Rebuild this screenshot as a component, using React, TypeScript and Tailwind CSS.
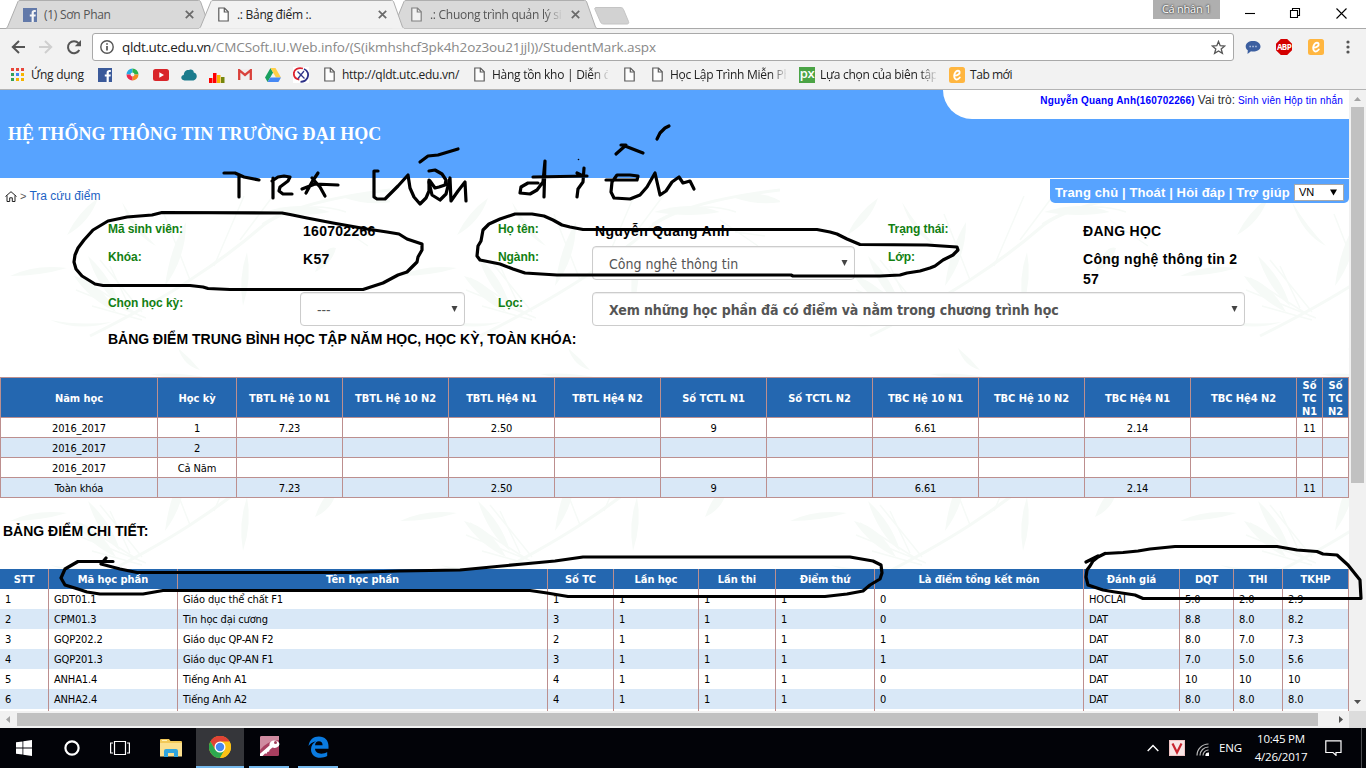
import React from 'react';

type IconProps = { className?: string };

const PageIcon = ({ className = '' }: IconProps) => (
  <svg className={`h-[15px] w-[11px] shrink-0 ${className}`} viewBox="0 0 11 15" fill="#fdfdfd" stroke="#5a5a5a" strokeWidth="1.2">
    <path d="M.8 1h5.7l3.7 3.8V14H.8z" />
    <path d="M6.3 1v4h3.9" fill="none" />
  </svg>
);

const FacebookIcon = ({ className = '' }: IconProps) => (
  <svg className={`h-3.5 w-3.5 shrink-0 ${className}`} viewBox="0 0 14 14">
    <rect width="14" height="14" fill="#3b5a9a" />
    <path d="M8.6 14V8.6H6.8V6.5h1.8V5c0-2 1.1-2.9 2.8-2.9h1.4v2h-1c-.8 0-1 .4-1 1.1v1.3h2l-.3 2.1h-1.7V14z" fill="#fff" />
  </svg>
);

const OrangeE = ({ className = '' }: IconProps) => (
  <svg className={`h-4 w-4 shrink-0 ${className}`} viewBox="0 0 16 16">
    <rect width="16" height="16" rx="2.5" fill="#ffb640" />
    <path d="M5.6 8.6C8.6 8.6 11 7 10.6 4.8 10.3 3.2 7.8 3.3 6.4 5.2 4.9 7.3 4.7 10.5 6.3 11.9 7.6 12.9 9.5 12.1 10.8 10.5" fill="none" stroke="#fff" strokeWidth="1.9" strokeLinecap="round" />
  </svg>
);

const TabClose = () => (
  <svg className="h-[9px] w-[9px] shrink-0" viewBox="0 0 9 9" stroke="#6a6a6a" strokeWidth="1.7">
    <path d="M.8.8l7.4 7.4M8.2.8L.8 8.2" />
  </svg>
);

function Tab({ title, icon, active = false, fade = false }: { title: string; icon: 'fb' | 'page'; active?: boolean; fade?: boolean }) {
  return (
    <div className={`relative -mr-3 h-[29px] w-[205px] shrink-0 ${active ? 'z-10' : ''}`}>
      <svg className="absolute inset-0 h-[29px] w-[205px]" viewBox="0 0 205 29">
        <path d="M0 28.5L1.5 27 12 1.5Q12.5.5 14 .5H192.5q1.5 0 2 1L203.5 27l1.5 1.5" fill={active ? '#f2f2f2' : '#d9d9d9'} stroke="#aeaeae" />
        {active && <path d="M0 29h205" stroke="#f2f2f2" strokeWidth="1.5" />}
      </svg>
      <div className="relative flex h-[29px] items-center pl-[17px]">
        <span className="flex w-[21px]">
          {icon === 'fb' ? <FacebookIcon className="opacity-75" /> : <PageIcon className={active ? 'ml-0.5' : 'ml-0.5 opacity-70'} />}
        </span>
        <span className={`w-[133px] overflow-hidden whitespace-nowrap text-xs tracking-[-0.28px] ${active ? 'text-[#222]' : 'text-[#555]'} ${fade ? '[mask-image:linear-gradient(to_right,#000_115px,transparent_133px)]' : ''}`}>
          {title}
        </span>
        <span className="ml-2"><TabClose /></span>
      </div>
    </div>
  );
}

function TabStrip() {
  return (
    <div className="flex h-[29px] border-b border-[#a9a9a9] bg-white pl-1.5">
      <Tab title="(1) Sơn Phan" icon="fb" />
      <Tab title=".: Bảng điểm :." icon="page" active />
      <Tab title=".: Chuong trình quản lý si" icon="page" fade />
      <svg className="ml-[9px] mt-[7px] h-[18px] w-9 shrink-0" viewBox="0 0 36 18">
        <path d="M2 .5h24c2 0 3 .5 3.5 2l5 12c.6 1.5 0 2.500-1.500 2.500H10c-2 0-3-.8-3.500-2L1 2.500C.6 1.200.8.5 2 .5z" fill="#d2d2d2" stroke="#c4c4c4" />
      </svg>
      <div className="ml-auto mr-[11px] flex">
        <div className="h-[19px] w-[67px] bg-[#afafaf] text-center text-[11px] leading-[18px] tracking-[-0.25px] text-white [text-shadow:0_0_2px_#333,0_0_2px_#444]">Cá nhân 1</div>
        <svg className="ml-[25px] h-[28px] w-[110px]" viewBox="0 0 110 28" fill="none" stroke="#000" strokeWidth="1.1">
          <path d="M0 13.5h10" />
          <path d="M45.5 10.5h7v7h-7zM47.5 10.5v-2h7v7h-2" />
          <path d="M91.5 8.5l10 10M101.5 8.5l-10 10" />
        </svg>
      </div>
    </div>
  );
}

function AddressBar() {
  return (
    <div className="flex h-[36px] items-center bg-[#f2f2f2] pl-[11px]">
      <svg className="h-4 w-[71px]" viewBox="0 0 71 16" fill="none" strokeWidth="2">
        <path d="M14 8H2M8 2L1.8 8 8 14" stroke="#555" />
        <path d="M28 8h12M34 2l6.2 6L34 14" stroke="#cfcfcf" />
        <path d="M68.3 11A6 6 0 1 1 67.5 4.2" stroke="#555" />
        <path d="M70 1v6.2h-6.2z" fill="#555" />
      </svg>
      <div className="ml-[10px] flex h-7 w-[1142px] items-center rounded-[3px] border border-[#a9a9a9] bg-white px-[7px]">
        <svg className="h-3.5 w-3.5" viewBox="0 0 14 14" fill="none" stroke="#555">
          <circle cx="7" cy="7" r="6.2" strokeWidth="1.4" />
          <path d="M7 6v4.5M7 3.2v1.6" strokeWidth="1.7" />
        </svg>
        <span className="ml-2 whitespace-nowrap text-[13.5px] tracking-[-0.34px] text-[#222]">qldt.utc.edu.vn</span>
        <span className="whitespace-nowrap text-[13.5px] tracking-[-0.1px] text-[#888]">/CMCSoft.IU.Web.info/(S(ikmhshcf3pk4h2oz3ou21jjl))/StudentMark.aspx</span>
        <svg className="ml-auto h-[15px] w-[15px]" viewBox="0 0 15 15" fill="none" stroke="#555" strokeWidth="1.3">
          <path d="M7.5 1.4l1.7 4.3 4.6.3-3.6 2.9 1.2 4.5-3.9-2.5-3.9 2.5 1.2-4.5L1.2 6l4.6-.3z" />
        </svg>
      </div>
      <svg className="ml-[11px] h-[15px] w-4" viewBox="0 0 16 15">
        <path d="M8 1c4 0 7.5 2 7.5 5.5S12 11.5 8 11.5c-.8 0-1.5 0-2-.2L2.5 14l.3-3.8C1.3 9.2.7 8 .7 6.5.7 3 4 1 8 1z" fill="#3c5fa0" />
        <path d="M4.5 6.5h1.3M7.4 6.5h1.3M10.3 6.5h1.3" stroke="#c7d4ee" strokeWidth="1.3" />
      </svg>
      <div className="ml-[15px] flex h-4 w-4 items-center justify-center bg-[#d40000] text-[8px] font-bold leading-none tracking-[-0.6px] text-white [clip-path:polygon(30%_0,70%_0,100%_30%,100%_70%,70%_100%,30%_100%,0_70%,0_30%)]">ABP</div>
      <OrangeE className="ml-4" />
      <svg className="ml-[22px] h-3.5 w-1" viewBox="0 0 4 14" fill="#555">
        <circle cx="2" cy="2" r="1.6" /><circle cx="2" cy="7" r="1.6" /><circle cx="2" cy="12" r="1.6" />
      </svg>
    </div>
  );
}

const fadeText = 'w-[116px] overflow-hidden whitespace-nowrap [mask-image:linear-gradient(to_right,#000_100px,transparent_118px)]';
const gridDots = ['#e8463a', '#e8463a', '#e8463a', '#34a058', '#4285f4', '#f6b400', '#34a058', '#f6b400', '#f6b400'];

function BookmarksBar() {
  return (
    <div className="flex h-[25px] items-center border-b border-[#b4b4b4] bg-[#f2f2f2] pb-[5px] pl-[11px] text-xs tracking-[-0.27px] text-[#222]">
      <svg className="h-[13px] w-[13px] shrink-0" viewBox="0 0 13 13">
        {gridDots.map((c, i) => <rect key={i} x={(i % 3) * 5} y={Math.floor(i / 3) * 5} width="3" height="3" fill={c} />)}
      </svg>
      <span className="ml-[7px] w-[67px] whitespace-nowrap">Ứng dụng</span>
      <FacebookIcon />
      <svg className="ml-[14px] h-[13px] w-[13px] shrink-0" viewBox="0 0 13 13" fill="none" strokeWidth="4">
        <path d="M2.5 6.5a4 4 0 0 1 4-4" stroke="#27a9e1" /><path d="M6.5 2.5a4 4 0 0 1 4 4" stroke="#2cb24a" />
        <path d="M10.5 6.5a4 4 0 0 1-4 4" stroke="#f58a1f" /><path d="M6.5 10.5a4 4 0 0 1-4-4" stroke="#ee2a4d" />
      </svg>
      <svg className="ml-[14px] h-3 w-4 shrink-0" viewBox="0 0 16 12">
        <rect width="16" height="12" rx="2.5" fill="#d9252a" /><path d="M6.3 3.2v5.6L11 6z" fill="#fff" />
      </svg>
      <svg className="ml-3 h-3 w-4 shrink-0" viewBox="0 0 16 12" fill="#1b7b8c">
        <path d="M3.5 11.5C-.5 11-.8 6.5 2.8 6 2.8 2.5 5.5.5 8.2 1c1.5-1 4.5-.5 4.6 2.5 3.8.5 4.2 7-.3 8z" />
      </svg>
      <svg className="ml-3 h-4 w-4 shrink-0" viewBox="0 0 16 16">
        <rect y="11" width="3.5" height="5" fill="#f00" /><rect x="4" y="6" width="3.5" height="10" fill="#f00" />
        <rect x="8" y="8" width="3.5" height="8" fill="#f4b400" /><rect x="12" y="10" width="3.5" height="6" fill="#76860b" />
      </svg>
      <svg className="ml-[13px] h-[11px] w-[14px] shrink-0" viewBox="0 0 14 11">
        <rect width="14" height="11" fill="#f0eeee" /><path d="M1.2 11V1.2L7 6l5.8-4.8V11" fill="none" stroke="#d9403a" strokeWidth="2.3" />
      </svg>
      <svg className="ml-[13px] h-[14px] w-4 shrink-0" viewBox="0 0 16 14">
        <path d="M5.5 0L0 9.5 2.6 14 8.1 4.5z" fill="#1aa05f" /><path d="M5.5 0h5L16 9.5h-5.1z" fill="#ffcf48" /><path d="M5.3 9.5H16L13.4 14H2.6z" fill="#4688f4" />
      </svg>
      <svg className="ml-3 h-4 w-4 shrink-0" viewBox="0 0 16 16" fill="none">
        <rect width="16" height="16" fill="#fff" />
        <path d="M10 1.5C5 0 1 2.5.8 6.5c0 3 2.2 5.5 5.5 6" stroke="#dd2330" strokeWidth="1.8" />
        <path d="M11 2c4 1.5 5 5.5 3.3 9-1.3 2.5-3.3 3.7-6.8 3.8" stroke="#2b2f86" strokeWidth="1.8" />
        <path d="M4.5 4.5l7 7M11 4L5 11.5" stroke="#33378c" strokeWidth="1.3" />
      </svg>
      <PageIcon className="ml-[15px]" />
      <span className="ml-[7px] w-[132px] whitespace-nowrap">http://qldt.utc.edu.vn/</span>
      <PageIcon />
      <span className={`ml-[7px] mr-4 ${fadeText}`}>Hàng tồn kho | Diễn đ</span>
      <PageIcon />
      <PageIcon className="ml-[17px]" />
      <span className={`ml-[7px] mr-[13px] ${fadeText}`}>Học Lập Trình Miễn Ph</span>
      <span className="flex h-4 w-4 shrink-0 items-center justify-center bg-[#4ba446] pb-0.5 text-[13px] font-semibold leading-none tracking-[-0.5px] text-white">px</span>
      <span className={`ml-[5px] mr-[13px] ${fadeText}`}>Lựa chọn của biên tập</span>
      <OrangeE />
      <span className="ml-[5px] whitespace-nowrap tracking-[-0.45px]">Tab mới</span>
    </div>
  );
}

function BambooBackdrop() {
  return (
    <svg className="absolute left-0 top-[88px] h-[533px] w-[1349px]" viewBox="0 0 1349 533">
      <defs>
        <pattern id="bamboo" width="390" height="245" patternUnits="userSpaceOnUse">
          <g fill="#f6faf7">
            <path d="M10 98Q35 86 67 90Q40 98 10 98z" />
            <path d="M67 57Q78 34 98 20Q90 44 67 57z" />
            <path d="M122 24Q138 50 156 68Q132 56 122 24z" />
            <path d="M247 74Q252 100 243 128Q238 100 247 74z" />
            <path d="M50 142Q80 148 112 144Q80 154 50 142z" />
            <path d="M178 170Q190 180 200 192Q184 188 178 170z" />
            <path d="M315 94Q325 66 336 70Q332 86 315 94z" />
            <path d="M345 20Q368 10 392 24Q368 28 345 20z" />
            <path d="M150 196Q180 194 210 200Q180 204 150 196z" />
            <path d="M264 34Q300 22 330 34Q300 40 264 34z" />
            <path d="M74 98Q100 104 116 134Q90 122 74 98z" />
            <path d="M88 78Q112 100 120 128Q98 110 88 78z" />
            <path d="M165 108Q170 70 186 44Q186 80 165 108z" />
          </g>
          <g fill="none" stroke="#f6faf7">
            <path d="M90 158Q150 128 190 102T260 50T390 12" strokeWidth="3" />
            <path d="M80 100l60 38M76 112l70 28M100 82l42 52M92 128l50 14M110 88l20 42" strokeWidth="1.5" />
            <path d="M262 46q40 -26 84 -12M240 62q30 -40 42 -56M190 102l-26 -66M214 88l30 -70M330 42l38 26M345 54l30 4" strokeWidth="1.5" />
          </g>
        </pattern>
      </defs>
      <rect width="1349" height="533" fill="url(#bamboo)" />
    </svg>
  );
}

function PageHeader() {
  return (
    <header className="relative">
      <div className="flex h-[88px] items-start justify-between bg-[#57a3ff]">
        <h1 className="pl-2 pt-[33px] font-['Liberation_Serif',serif] text-lg font-bold leading-[22px] tracking-[0.04px] text-white">HỆ THỐNG THÔNG TIN TRƯỜNG ĐẠI HỌC</h1>
        <div className="h-[29px] w-[406px] whitespace-nowrap rounded-bl-[29px] bg-white pr-1.5 pt-[2px] text-right text-[10px] leading-4 tracking-[0.2px] text-[#0000ff]">
          <b className="tracking-[0.18px]">Nguyễn Quang Anh(160702266)</b>{' '}
          <span className="text-xs tracking-normal text-[#333]">Vai trò:</span> Sinh viên Hộp tin nhắn
        </div>
      </div>
      <div className="flex items-start justify-between pt-px">
        <div className="flex h-[34px] items-center pl-[5px] text-xs text-[#1c62c4]">
          <svg className="h-[11px] w-3" viewBox="0 0 12 11" fill="none" stroke="#222">
            <path d="M.5 5.5L6 .7l5.5 4.8M2 4.5v6h2.7V6.8h2.6v3.7H10v-6" />
          </svg>
          <span className="ml-[3px] mr-[3px] text-[11px] text-[#555]">&gt;</span>Tra cứu điểm
        </div>
        <div className="flex h-6 w-[299px] items-center whitespace-nowrap rounded-b-[5px] bg-[#57a3ff] pl-[5px] pt-[3px] text-[13px] font-bold tracking-[0.12px] text-white">
          Trang chủ | Thoát | Hỏi đáp | Trợ giúp
          <div className="ml-1 flex h-[17px] w-[50px] items-center justify-between border border-[#a9a9a9] bg-white pl-1 pr-1.5 text-[11px] font-normal tracking-normal text-black">
            VN
            <svg className="h-[7px] w-[7px]" viewBox="0 0 7 7"><path d="M0 .5h7L3.5 6.5z" /></svg>
          </div>
        </div>
      </div>
    </header>
  );
}

function SelectBox({ text, className }: { text: string; className: string }) {
  return (
    <div className={`flex h-[34px] items-center justify-between rounded border border-[#ccc] bg-white pl-4 pr-1.5 font-['DejaVu_Sans_Condensed','DejaVu_Sans',sans-serif] text-sm text-[#555] shadow-[inset_0_1px_1px_rgba(0,0,0,0.075)] ${className}`}>
      <span className="whitespace-nowrap pt-0.5">{text}</span>
      <svg className="h-1.5 w-[7px]" viewBox="0 0 7 6"><path d="M.5 0h6L3.5 6z" fill="#444" /></svg>
    </div>
  );
}

const Label = ({ children, className = '' }: { children: React.ReactNode; className?: string }) => (
  <span className={`text-xs font-bold leading-5 tracking-[-0.08px] text-[#128012] ${className}`}>{children}</span>
);
const Value = ({ children }: { children: React.ReactNode }) => (
  <span className="pt-0.5 text-sm font-bold leading-5 tracking-[0.28px] text-black">{children}</span>
);

function StudentInfo() {
  return (
    <section className="relative pl-[108px] pt-[6px]">
      <div className="grid h-7 grid-cols-[195px_195px_97px_293px_195px_162px]">
        <Label>Mã sinh viên:</Label><Value>160702266</Value>
        <Label>Họ tên:</Label><Value>Nguyễn Quang Anh</Value>
        <Label>Trạng thái:</Label><Value>ĐANG HỌC</Value>
      </div>
      <div className="grid h-[45px] grid-cols-[195px_195px_94px_296px_195px_162px]">
        <Label>Khóa:</Label><Value>K57</Value>
        <Label>Ngành:</Label><SelectBox text="Công nghệ thông tin" className="-mt-px w-[263px]" />
        <Label>Lớp:</Label><Value>Công nghệ thông tin 2 57</Value>
      </div>
      <div className="grid h-9 grid-cols-[192px_198px_94px_653px]">
        <Label className="pt-px">Chọn học kỳ:</Label><SelectBox text="---" className="w-[165px]" />
        <Label className="pt-px">Lọc:</Label><SelectBox text="Xem những học phần đã có điểm và nằm trong chương trình học" className="font-bold tracking-[-0.1px]" />
      </div>
      <h2 className="pt-px text-sm font-bold leading-5 text-black">BẢNG ĐIỂM TRUNG BÌNH HỌC TẬP NĂM HỌC, HỌC KỲ, TOÀN KHÓA:</h2>
    </section>
  );
}

const summaryHead = ['Năm học', 'Học kỳ', 'TBTL Hệ 10 N1', 'TBTL Hệ 10 N2', 'TBTL Hệ4 N1', 'TBTL Hệ4 N2', 'Số TCTL N1', 'Số TCTL N2', 'TBC Hệ 10 N1', 'TBC Hệ 10 N2', 'TBC Hệ4 N1', 'TBC Hệ4 N2', 'Số TC N1', 'Số TC N2'];
const summaryRows = [
  ['2016_2017', '1', '7.23', '', '2.50', '', '9', '', '6.61', '', '2.14', '', '11', ''],
  ['2016_2017', '2', '', '', '', '', '', '', '', '', '', '', '', ''],
  ['2016_2017', 'Cả Năm', '', '', '', '', '', '', '', '', '', '', '', ''],
  ['Toàn khóa', '', '7.23', '', '2.50', '', '9', '', '6.61', '', '2.14', '', '11', ''],
];
const summaryCols = 'grid grid-cols-[157px_79px_repeat(10,106px)_26px_26px]';
const tableFont = "font-['DejaVu_Sans_Condensed','DejaVu_Sans',sans-serif] text-[11px]";

function SummaryTable() {
  return (
    <div className={`relative mt-7 border-l border-t border-[#bc8f8f] text-center ${tableFont}`}>
      <div className={`h-10 bg-[#2467b0] font-bold leading-[13px] tracking-[-0.05px] text-white ${summaryCols}`}>
        {summaryHead.map((h) => (
          <div key={h} className="flex h-10 items-center justify-center border-b border-r border-[#bc8f8f] pt-0.5">{h}</div>
        ))}
      </div>
      {summaryRows.map((row, r) => (
        <div key={r} className={`h-5 leading-[17px] tracking-[-0.15px] text-black ${r % 2 ? 'bg-[#d9e8f7]' : 'bg-white'} ${summaryCols}`}>
          {row.map((c, i) => <div key={i} className="h-5 border-b border-r border-[#bc8f8f] pt-0.5">{c}</div>)}
        </div>
      ))}
    </div>
  );
}

const detailHead = ['STT', 'Mã học phần', 'Tên học phần', 'Số TC', 'Lần học', 'Lần thi', 'Điểm thứ', 'Là điểm tổng kết môn', 'Đánh giá', 'DQT', 'THI', 'TKHP'];
const detailRows = [
  ['1', 'GDT01.1', 'Giáo dục thể chất F1', '1', '1', '1', '1', '0', 'HOCLAI', '5.0', '2.0', '2.9'],
  ['2', 'CPM01.3', 'Tin học đại cương', '3', '1', '1', '1', '0', 'DAT', '8.8', '8.0', '8.2'],
  ['3', 'GQP202.2', 'Giáo dục QP-AN F2', '2', '1', '1', '1', '1', 'DAT', '8.0', '7.0', '7.3'],
  ['4', 'GQP201.3', 'Giáo dục QP-AN F1', '3', '1', '1', '1', '1', 'DAT', '7.0', '5.0', '5.6'],
  ['5', 'ANHA1.4', 'Tiếng Anh A1', '4', '1', '1', '1', '0', 'DAT', '10', '10', '10'],
  ['6', 'ANHA2.4', 'Tiếng Anh A2', '4', '1', '1', '1', '0', 'DAT', '8.0', '8.0', '8.0'],
  ['', '', '', '', '', '', '', '', '', '', '', ''],
];
const detailCols = 'grid h-5 grid-cols-[49px_129px_370px_66px_85px_77px_99px_209px_96px_54px_49px_66px] leading-[18px]';

function DetailTable() {
  return (
    <div className={`relative ${tableFont}`}>
      <div className={`bg-[#2467b0] text-center font-bold tracking-[-0.05px] text-white ${detailCols}`}>
        {detailHead.map((h) => <div key={h} className="border-r border-[#bc8f8f] pt-0.5">{h}</div>)}
      </div>
      {detailRows.map((row, r) => (
        <div key={r} className={`tracking-[-0.15px] text-black ${r % 2 ? 'bg-[#d9e8f7]' : 'bg-white'} ${detailCols}`}>
          {row.map((c, i) => <div key={i} className="border-r border-[#bc8f8f] pl-[5px] pt-0.5">{c}</div>)}
        </div>
      ))}
    </div>
  );
}

function Taskbar() {
  return (
    <div className="flex h-10 items-center bg-[#020308] text-white">
      <svg className="ml-4 h-4 w-4" viewBox="0 0 16 16" fill="#fff">
        <path d="M0 2.3l6.5-.9v6.2H0zM7.3 1.3L16 0v7.6H7.3zM0 8.4h6.5v6.2L0 13.7zM7.3 8.4H16V16l-8.7-1.3z" />
      </svg>
      <svg className="ml-8 h-4 w-4" viewBox="0 0 16 16"><circle cx="8" cy="8" r="6.6" fill="none" stroke="#fff" strokeWidth="2.2" /></svg>
      <svg className="ml-[30px] h-4 w-5" viewBox="0 0 20 16" fill="none" stroke="#fff" strokeWidth="1.2">
        <path d="M4.5 1.5h11v13h-11zM3 3H.6v10H3M17 3h2.4v10H17" />
      </svg>
      <svg className="ml-[30px] h-[18px] w-[22px]" viewBox="0 0 22 18">
        <path d="M0 1q0-1 1-1h8l1.5 2H21q1 0 1 1v14H0z" fill="#f2c959" /><path d="M0 4h22v13.5H0z" fill="#fbe08f" />
        <path d="M4 18v-6q0-2 2-2h10q2 0 2 2v6h-4v-4H8v4z" fill="#31a5dd" /><path d="M2 1h5v1H2z" fill="#fff2b8" />
      </svg>
      <div className="ml-[14px] flex h-10 w-12 items-center justify-center border-b-2 border-[#76b9ed] bg-[#35363a]">
        <svg className="h-[22px] w-[22px]" viewBox="0 0 24 24">
          <circle cx="12" cy="12" r="12" fill="#fbc116" />
          <path d="M12 12L1.6 6A12 12 0 0 1 22.4 6z" fill="#e04335" />
          <path d="M12 6h10.4A12 12 0 0 0 1.6 6L6.8 15z" fill="#e04335" />
          <path d="M1.6 6A12 12 0 0 0 12 24l5.2-9-5.2 3-5.2-3z" fill="#2da94f" />
          <path d="M22.4 6H12l5.2 9L12 24A12 12 0 0 0 22.4 6z" fill="#fbc116" />
          <circle cx="12" cy="12" r="6" fill="#fff" /><circle cx="12" cy="12" r="4.6" fill="#4688f1" />
        </svg>
      </div>
      <div className="ml-[5px] flex h-10 w-10 items-center justify-center border-b-2 border-[#76b9ed]">
        <svg className="mb-0.5 h-5 w-[21px]" viewBox="0 0 21 20">
          <path d="M1 1.5q0-1.5 1.5-1.5H20v18.5q0 1.5-1.5 1.5H1z" fill="#a83f60" /><path d="M1 1.5q0-1.5 1.5-1.5H20v4Q8 5 1 14z" fill="#cf8ba0" />
          <path d="M20.5 8a5 4.3 0 0 1-7 3.6L10.5 14l-.3 1.6-2 .3-.2 1.5-2 .2L3.5 20H1v-2.2l9.5-8.3A5 4.3 0 1 1 20.5 8z" fill="#fff" />
          <circle cx="16.5" cy="6.5" r="1.5" fill="#a4405c" />
        </svg>
      </div>
      <div className="ml-[9px] flex h-10 w-10 items-center justify-center border-b-2 border-[#76b9ed]">
        <svg className="h-[22px] w-[21px]" viewBox="0 0 21 22">
          <path d="M.5 10C1.5 3.5 5.5.5 10.8.5c6.200 0 9.700 4 9.700 9.500v2.800H7c.3 3.400 3.200 4.900 6.200 4.900 2.400 0 4.300-.6 6-1.600v4c-2 1.200-4.300 1.700-7 1.700-5.500 0-9.200-3.300-9.200-8.600 0-3.500 2-6.500 5-8C4.500 6 2.200 7.700.5 10zM7 9.200h7.600c0-2.500-1.300-4-3.700-4S7.400 6.800 7 9.200z" fill="#0a7be0" />
        </svg>
      </div>
      <div className="ml-auto flex h-10 items-center">
        <svg className="h-2 w-3" viewBox="0 0 12 8" fill="none" stroke="#fff" strokeWidth="1.4"><path d="M.7 7L6 1.5 11.3 7" /></svg>
        <svg className="ml-[10px] h-4 w-4" viewBox="0 0 16 16">
          <rect width="16" height="16" fill="#f0c4c4" /><rect x="1" y="1" width="14" height="14" fill="#f8e6e6" /><path d="M3.5 3.5l4.5 9 4.5-9" fill="none" stroke="#c8252f" strokeWidth="2.2" />
        </svg>
        <svg className="ml-[11px] mt-0.5 h-[13px] w-[13px]" viewBox="0 0 13 13" fill="none" stroke="#bbb" strokeWidth="1.2">
          <path d="M1 12.5A11.5 11.5 0 0 1 12.5 1M4 12.5A8.5 8.5 0 0 1 12.5 4M7 12.5A5.5 5.5 0 0 1 12.5 7" />
          <path d="M10 12.5A2.5 2.5 0 0 1 12.5 10v2.5z" fill="#fff" stroke="#fff" />
        </svg>
        <span className="ml-[10px] w-6 text-[11.5px] tracking-[-0.2px]">ENG</span>
        <div className="ml-[9px] w-[58px] text-center text-[11.5px] leading-[18px] tracking-[-0.2px]">10:45 PM<br />4/26/2017</div>
        <svg className="ml-[15px] h-4 w-[17px]" viewBox="0 0 17 16" fill="none" stroke="#fff" strokeWidth="1.2">
          <path d="M.8.8h15.2v11.7h-5v2.8L8 12.5H.8z" />
        </svg>
        <div className="ml-[19px] mr-1 h-10 w-px bg-[#4a4b50]" />
      </div>
    </div>
  );
}

const strokes = [
  // T R A
  'M224 173L235 173L244 177L259 180M239 175V197',
  'M273 178V198M272 181L278 177L284 176L290 177L288 181L280 187L279 191L283 194L292 194',
  'M318 173L312 182L306 193M312 178L320 187L325 196M302 189L315 184L338 185',
  // second word
  'M378 171L374 171L374 197L377 199L385 199L398 186L408 175L410 188L414 197L420 204L426 198L429 191L429 180',
  'M429 171L435 170L442 174L446 180L445 185L439 187L435 188L430 181M429 182L432 195L440 200L446 194L450 178L451 201L458 191L465 182L466 201',
  'M420 162L428 156L438 155L458 149',
  // third word
  'M538 183L528 183L521 187L520 193L530 194L537 190L543 182L545 161M545 161L544 197M533 177L587 176M584 168L583 182L578 189L577 197M577 173L583 176',
  'M606 180L637 180L638 176L630 175L617 175L612 182L611 192L614 198L630 199L640 195L647 187L655 173L660 195L666 191L672 182L679 177L683 183L690 181L694 189',
  'M616 154L625 146L643 153M621 145L626 145M657 139L660 133L665 128L669 126',
  // rings
  'M282 213L162 212.5L152 215L127 217L108 221L93 230L84 240L78 248L75 255L74 262L76 269L82 276L95 284L103 285.5L190 285.5L203 287L208 288.5L230 289.5L363 289.5L383 283L398 275L407 272L417 262L418 257L422 250L422 244L407 239L399 234L387 232L367 229L350 226L333 223L307 218L290 214.5L282 213',
  'M583 229.5L817 229.5L830 232L837 234L847 239L860 244.5L927 245L957 247L958 250L953 255L943 260L935 266L930 268L920 271L907 273L900 275L880 276L793 276L791 275L557 275L525 273L513 269L500 264L480 260L477 256L478 246L481 241L483 230L489 224L500 219L515 214L532 214L544 216L553 220L562 225L570 227L583 229.5',
  'M113 561.5H78L65 569L61 578L65 585L78 589L87 592L100 594L143 594L163 590.5H530L547 593L568 596.5H825L847 594L863 591L870 585L880 579L882 573L881 565L873 561L850 557L583 557L555 561L523 564L460 570L400 571L350 572.5H137L120 569L101 564L106 558',
  'M1086 562L1098 556M1105 553.5L1123 552.5L1138 551L1150 549L1175 546.5H1277L1297 550L1317 551.5L1323 554L1337 555L1348 565L1360 580L1361 598.5H1143L1135 595L1115 592L1103 590L1088 585L1086 577L1087 570L1090 566L1093 561L1098 557L1105 553.5',
];

export default function App() {
  return (
    <div className="relative flex h-[768px] w-[1366px] flex-col overflow-hidden bg-white font-['Open_Sans','Noto_Sans',sans-serif]">
      <TabStrip />
      <AddressBar />
      <BookmarksBar />
      <div className="flex h-[621px]">
        <main className="relative h-[621px] w-[1349px] overflow-hidden bg-white font-['Liberation_Sans',Arial,sans-serif]">
          <BambooBackdrop />
          <PageHeader />
          <StudentInfo />
          <SummaryTable />
          <h2 className="relative pb-[28px] pl-[3px] pt-[23px] text-sm font-bold leading-5 text-black">BẢNG ĐIỂM CHI TIẾT:</h2>
          <DetailTable />
        </main>
        <div className="flex w-[17px] flex-col items-center bg-[#f1f1f1]">
          <svg className="mt-[7px] h-1 w-[7px]" viewBox="0 0 7 4" fill="#a3a3a3"><path d="M0 4h7L3.5 0z" /></svg>
          <div className="mt-1.5 h-[376px] w-[13px] bg-[#c1c1c1]" />
          <svg className="mb-[7px] mt-auto h-1 w-[7px]" viewBox="0 0 7 4" fill="#505050"><path d="M0 0h7L3.5 4z" /></svg>
        </div>
      </div>
      <div className="flex h-[17px] items-center bg-[#f1f1f1]">
        <svg className="ml-1.5 h-[7px] w-1" viewBox="0 0 4 7" fill="#a3a3a3"><path d="M4 0v7L0 3.5z" /></svg>
        <div className="ml-[7px] h-[13px] w-[1301px] bg-[#c1c1c1]" />
        <svg className="ml-[21px] h-[7px] w-1" viewBox="0 0 4 7" fill="#505050"><path d="M0 0v7l4-3.5z" /></svg>
        <div className="ml-auto h-[17px] w-[17px] bg-[#dcdcdc]" />
      </div>
      <Taskbar />
      <svg className="pointer-events-none absolute inset-0 z-20 h-[768px] w-[1366px]" viewBox="0 0 1366 768" fill="none" stroke="#000" strokeWidth="3.2" strokeLinecap="round" strokeLinejoin="round">
        {strokes.map((d) => <path key={d} d={d} />)}
        <circle cx="578.5" cy="159.5" r=".8" fill="#000" stroke="none" />
      </svg>
    </div>
  );
}
